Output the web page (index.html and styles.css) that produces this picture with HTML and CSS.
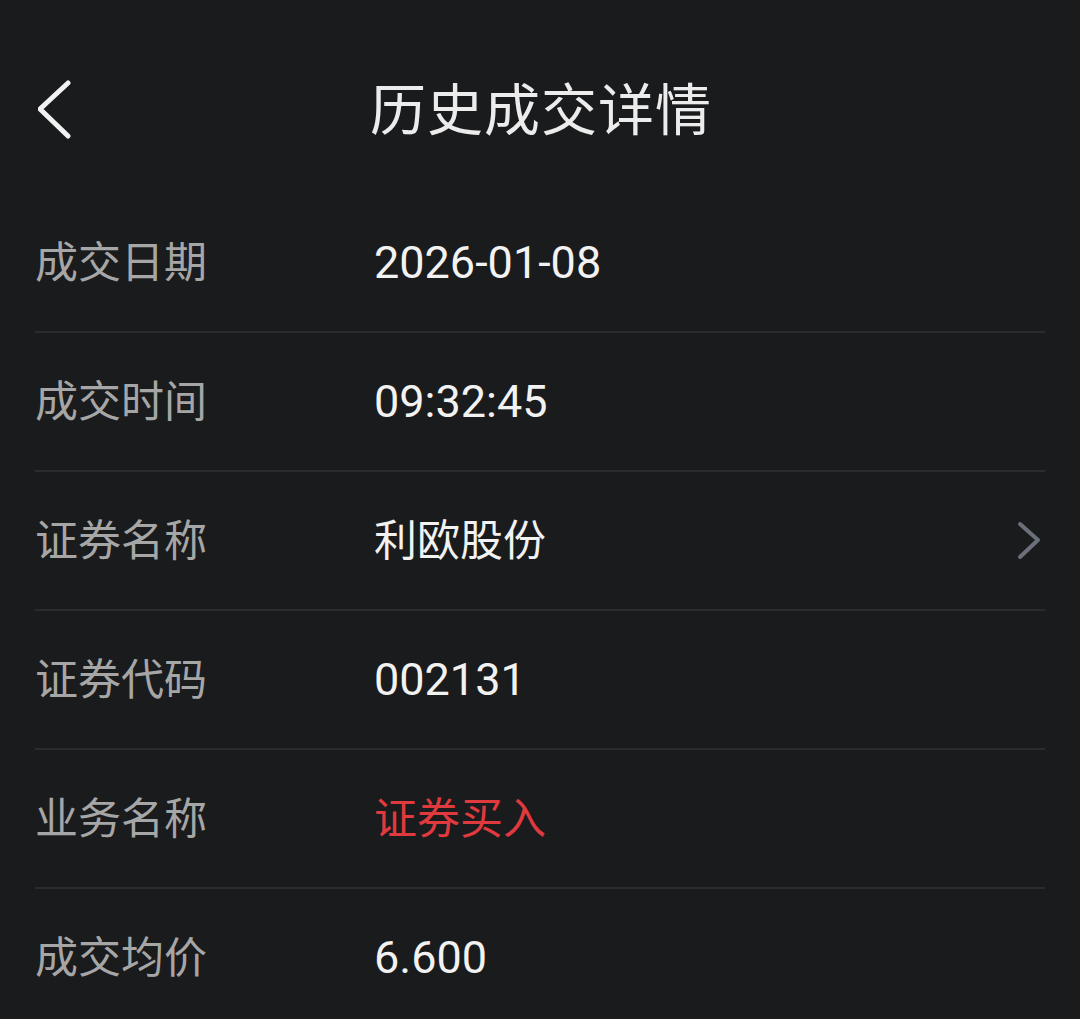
FILE: index.html
```html
<!DOCTYPE html>
<html lang="zh-CN">
<head>
  <meta charset="UTF-8">
  <meta name="viewport" content="width=device-width, initial-scale=1.0">
  <title>历史成交详情</title>
  <link rel="stylesheet" href="styles.css">
</head>
<body>
  <div class="header">
    <div class="back">
      <svg width="40" height="60" viewBox="0 0 40 60">
        <polyline points="30,3 2,29 30,56" fill="none" stroke="#f2f2f2" stroke-width="5" stroke-linecap="round" stroke-linejoin="round"/>
      </svg>
    </div>
    <h1 class="title">历史成交详情</h1>
    <div></div>
  </div>

  <div class="detail-list">
    <div class="row">
      <span class="label">成交日期</span>
      <span class="value">2026-01-08</span>
    </div>
    <div class="row">
      <span class="label">成交时间</span>
      <span class="value">09:32:45</span>
    </div>
    <div class="row">
      <span class="label">证券名称</span>
      <span class="value text">利欧股份</span>
      <svg class="arrow" width="26" height="40" viewBox="0 0 26 40">
        <polyline points="4,3 22,19 4,36" fill="none" stroke="#6c707a" stroke-width="4" stroke-linecap="round" stroke-linejoin="round"/>
      </svg>
    </div>
    <div class="row">
      <span class="label">证券代码</span>
      <span class="value">002131</span>
    </div>
    <div class="row">
      <span class="label">业务名称</span>
      <span class="value text buy">证券买入</span>
    </div>
    <div class="row">
      <span class="label">成交均价</span>
      <span class="value">6.600</span>
    </div>
  </div>
</body>
</html>
```

FILE: styles.css
```css
body {
  margin: 0;
  background-color: #1a1b1d;
  font-family: "Noto Sans CJK SC", "Noto Sans", sans-serif;
  color: #f0f0f0;
}
.header {
  height: 194px;
  display: grid;
  grid-template-columns: 1fr auto 1fr;
  align-items: center;
  padding: 26px 36px 0;
  box-sizing: border-box;
}
.back {
  display: flex;
  align-items: center;
  padding-left: 2px;
}
.title {
  margin: -10px 0 0 2px;
  font-size: 56px;
  font-weight: 400;
  color: #ececec;
  letter-spacing: 1px;
}
.detail-list {
  padding: 0 35px;
}
.row {
  display: flex;
  align-items: center;
  height: 137px;
  border-bottom: 2px solid #2b2c2f;
}
.label {
  width: 339px;
  margin-top: -8px;
  font-size: 43px;
  color: #a6a6a6;
}
.value {
  flex: 1;
  font-family: "Roboto", "Noto Sans CJK SC", sans-serif;
  font-size: 45px;
  color: #f2f2f2;
}
.value.text {
  font-family: "Noto Sans CJK SC", sans-serif;
  font-size: 43px;
  margin-top: -8px;
}
.value.buy {
  color: #e0393e;
}
.arrow {
  margin-right: 3px;
}
```
